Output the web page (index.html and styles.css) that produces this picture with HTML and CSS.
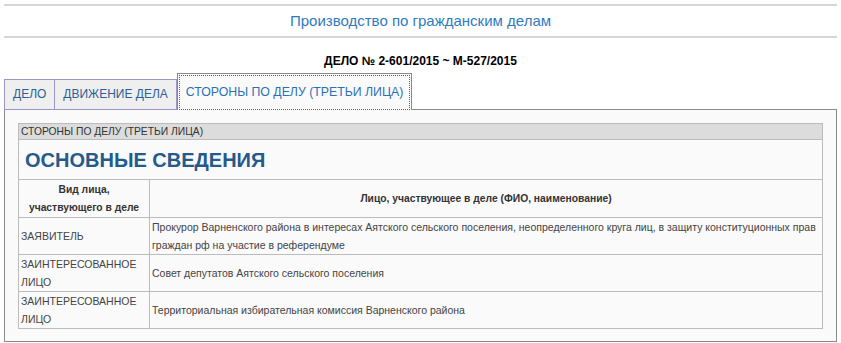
FILE: index.html
```html
<!DOCTYPE html>
<html lang="ru">
<head>
    <meta charset="UTF-8">
    <title>Производство по гражданским делам</title>
    <link rel="stylesheet" href="styles.css">
</head>
<body>
    <div class="page">
        <div class="page-title">Производство по гражданским делам</div>
        <div class="case-number">ДЕЛО № 2-601/2015 ~ М-527/2015</div>

        <ul class="tabs">
            <li class="tab">ДЕЛО</li>
            <li class="tab">ДВИЖЕНИЕ ДЕЛА</li>
            <li class="tab active"><span>СТОРОНЫ ПО ДЕЛУ (ТРЕТЬИ ЛИЦА)</span></li>
        </ul>

        <div class="panel">
            <table class="parties">
                <tr>
                    <th colspan="2" class="caption">СТОРОНЫ ПО ДЕЛУ (ТРЕТЬИ ЛИЦА)</th>
                </tr>
                <tr>
                    <td colspan="2" class="section">ОСНОВНЫЕ СВЕДЕНИЯ</td>
                </tr>
                <tr class="head">
                    <td class="col-kind">Вид лица,<br>участвующего в деле</td>
                    <td>Лицо, участвующее в деле (ФИО, наименование)</td>
                </tr>
                <tr class="first">
                    <td>ЗАЯВИТЕЛЬ</td>
                    <td>Прокурор Варненского района в интересах Аятского сельского поселения, неопределенного круга лиц, в защиту конституционных прав граждан рф на участие в референдуме</td>
                </tr>
                <tr>
                    <td>ЗАИНТЕРЕСОВАННОЕ ЛИЦО</td>
                    <td>Совет депутатов Аятского сельского поселения</td>
                </tr>
                <tr>
                    <td>ЗАИНТЕРЕСОВАННОЕ ЛИЦО</td>
                    <td>Территориальная избирательная комиссия Варненского района</td>
                </tr>
            </table>
        </div>
    </div>
</body>
</html>
```

FILE: styles.css
```css
* {
    margin: 0;
    padding: 0;
    box-sizing: border-box;
}
body {
    background: white;
    font-family: "Liberation Sans", Arial, sans-serif;
    padding: 4px;
}
.page-title {
    border-top: 2px solid #d6d6d6;
    border-bottom: 2px solid #d6d6d6;
    height: 34px;
    line-height: 30px;
    text-align: center;
    font-size: 15px;
    color: #2f7bbf;
}
.case-number {
    text-align: center;
    font-size: 12px;
    font-weight: bold;
    color: #000;
    margin-top: 15px;
    line-height: 16px;
}
.tabs {
    list-style: none;
    display: flex;
    align-items: flex-end;
    margin-top: 4px;
    position: relative;
    z-index: 1;
}
.tab {
    height: 31px;
    padding: 0 8px;
    line-height: 29px;
    font-size: 12px;
    color: #2c5f94;
    background: #efefef;
    border: 1px solid #9c95c8;
    border-left: none;
    margin-bottom: -1px;
}
.tab:first-child {
    border-left: 1px solid #9c95c8;
}
.tab.active {
    height: 37px;
    padding: 1px;
    background: #fafafa;
    border: 1px solid #8a8a8a;
    border-bottom: none;
    color: #2a70b8;
    font-size: 12.3px;
}
.tab.active span {
    display: block;
    height: 35px;
    line-height: 33px;
    padding: 0 6px;
    border: 1px dotted #1b6ec2;
}
.panel {
    background: #fafafa;
    border: 1px solid #8a8a8a;
    padding: 13px 13px 12px;
}
.parties {
    width: 100%;
    border-collapse: collapse;
    font-size: 10.5px;
    color: #444;
}
.parties th,
.parties td {
    border: 1px solid #bcbcbc;
    text-align: left;
    font-weight: normal;
    vertical-align: middle;
    line-height: 18px;
    padding: 0 2px;
}
.parties .caption {
    background: #dcdcdc;
    color: #333;
    font-size: 10.3px;
    height: 16px;
    line-height: 14px;
}
.parties .section {
    font-size: 20px;
    font-weight: bold;
    color: #245a8c;
    height: 40px;
    padding-left: 6px;
}
.parties .head td {
    font-weight: bold;
    font-size: 10.3px;
    text-align: center;
    color: #333;
    height: 38px;
}
.parties .col-kind {
    width: 131px;
}
.parties tr td {
    height: 37px;
}
.parties tr.first td {
    height: 36px;
}
```
